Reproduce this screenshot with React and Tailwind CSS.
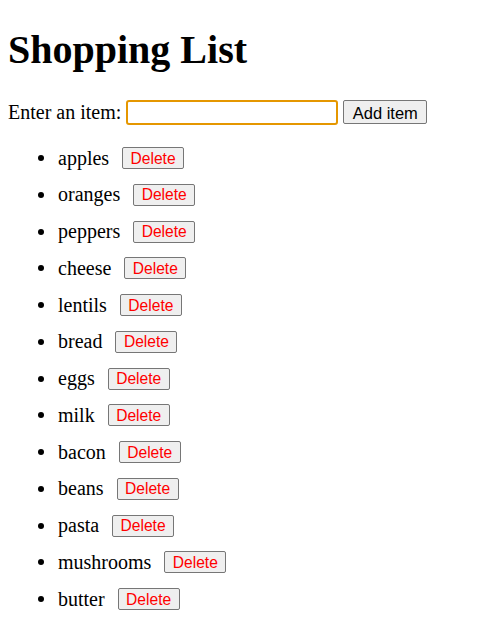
import React from "react";

const items = ["apples","oranges","peppers","cheese","lentils","bread","eggs","milk","bacon","beans","pasta","mushrooms","butter"];

export default function App() {
  return (
    <div className="bg-white min-h-[639px] pl-[8px] text-black">
      <div className="font-['Liberation_Serif',serif]">
        <h1 className="pt-[28px] h-[72px] text-[40px] leading-[44px] font-bold">Shopping List</h1>
        <div className="mt-[28px] flex items-center h-[25px]">
          <span className="text-[20px] leading-[23px]">Enter an item:</span>
          <div className="ml-[5px] w-[212px] h-[25px] border-2 border-[#e59700] rounded-[3px] bg-white"></div>
          <button className="ml-[5px] w-[84px] h-[24px] self-start border border-[#767676] rounded-[2px] bg-[#efefef] font-['Liberation_Sans',sans-serif] text-[16.5px] leading-[20px] pt-[1px] text-black flex items-center justify-center">Add item</button>
        </div>
        <ul className="mt-[22px] flex flex-col gap-[14.75px]">
          {items.map((it) => (
            <li key={it} className="flex items-center h-[22px]">
              <span className="ml-[30px] w-[6px] h-[6px] rounded-full bg-black"></span>
              <span className="ml-[14px] text-[20px] leading-[23px]">{it}</span>
              <button className="ml-[13px] w-[62px] h-[22px] border border-[#767676] rounded-[2px] bg-[#efefef] font-['Liberation_Sans',sans-serif] text-[15.6px] leading-[20px] pt-[1px] text-[#ff0000] flex items-center justify-center">Delete</button>
            </li>
          ))}
        </ul>
      </div>
    </div>
  );
}
